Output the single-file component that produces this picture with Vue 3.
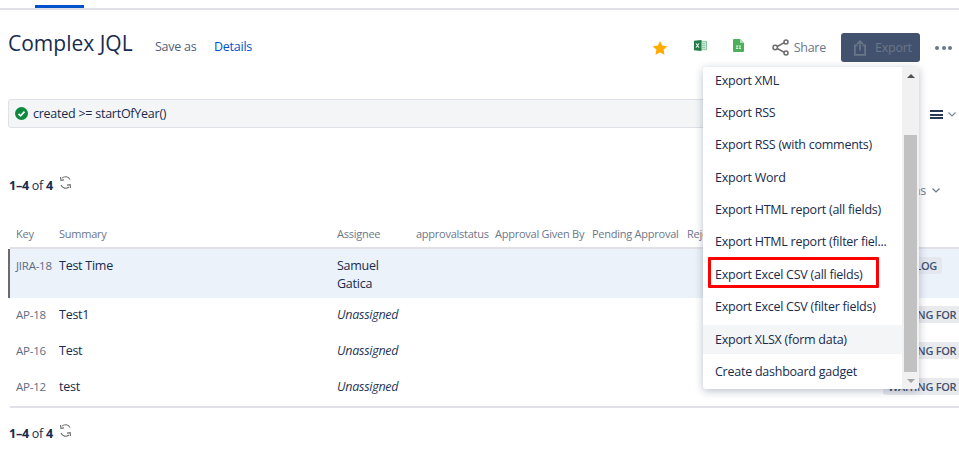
<script setup>
const menuItems = [
  'Export XML',
  'Export RSS',
  'Export RSS (with comments)',
  'Export Word',
  'Export HTML report (all fields)',
  'Export HTML report (filter fiel...',
  'Export Excel CSV (all fields)',
  'Export Excel CSV (filter fields)',
  'Export XLSX (form data)',
  'Create dashboard gadget'
]

const headers = ['Key', 'Summary', 'Assignee', 'approvalstatus', 'Approval Given By', 'Pending Approval', 'Rejected By', 'Status']

const issues = [
  { key: 'JIRA-18', summary: 'Test Time', assignee: 'Samuel Gatica', status: 'Backlog', selected: true },
  { key: 'AP-18', summary: 'Test1', assignee: null, status: 'Waiting for approval' },
  { key: 'AP-16', summary: 'Test', assignee: null, status: 'Waiting for approval' },
  { key: 'AP-12', summary: 'test', assignee: null, status: 'Waiting for approval' }
]
</script>

<template>
  <div class="page">
    <div class="topnav"><span class="tab"></span></div>

    <header class="head">
      <h1>Complex JQL</h1>
      <a class="save">Save as</a>
      <a class="details">Details</a>
      <div class="tools">
        <svg class="star" width="16" height="16" viewBox="0 0 16 16"><path d="M8 1l2.200 4.600 5 .7-3.600 3.500.9 5L8 12.400l-4.500 2.400.9-5L.8 6.300l5-.7z" fill="#ffab00"/></svg>
        <svg class="excel" width="13" height="11" viewBox="0 0 13 13" preserveAspectRatio="none">
          <rect x="5" y="1.500" width="7.500" height="10" fill="#cfe8d8" stroke="#8cc4a2"/>
          <path d="M8 4h3M8 6.500h3M8 9h3" stroke="#8cc4a2"/>
          <path d="M0 1L7.500 0v13L0 12z" fill="#1f7f45"/>
          <path d="M2 4l3 5M5 4L2 9" stroke="#fff" stroke-width="1.100"/>
        </svg>
        <svg class="sheet" width="11" height="13" viewBox="0 0 11 13">
          <path d="M0 1a1 1 0 011-1h6l4 4v8a1 1 0 01-1 1H1a1 1 0 01-1-1z" fill="#4caf5c"/>
          <path d="M7 0l4 4H7z" fill="#a9dcb8"/>
          <path d="M3 6.500h5v3.500H3z" fill="#d7eedc"/>
          <path d="M5.500 6.500V10M3 8.200h5" stroke="#4caf5c" stroke-width=".8"/>
        </svg>
        <a class="share">
          <svg width="17" height="17" viewBox="0 0 17 17" fill="#fff" stroke="#6b6b6b" stroke-width="1.500">
            <path d="M3.500 8.500L14 2.700M3.500 8.500L14 14.300"/>
            <circle cx="3.200" cy="8.500" r="2.200"/><circle cx="14" cy="2.900" r="2"/><circle cx="14" cy="14.100" r="2"/>
          </svg>
          Share
        </a>
        <button class="export">
          <svg width="12" height="16" viewBox="0 0 14 18" fill="none" stroke="#6b7688" stroke-width="2">
            <path d="M4 6H1v11h12V6h-3"/><path d="M7 12V2"/><path d="M3.500 4.500L7 1l3.500 3.500" />
          </svg>
          Export
        </button>
        <span class="dots"><i></i><i></i><i></i></span>
      </div>
    </header>

    <div class="jql">
      <svg width="13" height="13" viewBox="0 0 13 13"><circle cx="6.500" cy="6.500" r="6.500" fill="#0b8a3e"/><path d="M3.500 6.800l2.100 2 3.900-4.200" fill="none" stroke="#fff" stroke-width="1.700"/></svg>
      <span>created &gt;= startOfYear()</span>
    </div>
    <div class="view-toggle">
      <span class="burger"><i></i><i></i><i></i></span>
      <svg width="8" height="5" viewBox="0 0 8 5" fill="none" stroke="#7a869a" stroke-width="1.200"><path d="M.5.5L4 4 7.500.5"/></svg>
    </div>

    <div class="count top-count">
      <span><b>1–4</b> of <b>4</b></span>
      <svg class="refresh" width="13" height="13" viewBox="0 0 13 13" fill="none" stroke="#6f6f6f" stroke-width="1.100"><path d="M11 3.500A5 5 0 003 2.200"/><path d="M1.500 1l.4 3.400 3.200-.5"/><path d="M2 9a5 5 0 008 2"/><path d="M11.500 12l-.3-3.400-3.200.5"/></svg>
      <span class="columns">Columns
        <svg width="8" height="5" viewBox="0 0 8 5" fill="none" stroke="#6b778c" stroke-width="1.200"><path d="M.5.5L4 4 7.500.5"/></svg>
      </span>
    </div>

    <div class="table">
      <div class="row header">
        <span v-for="h in headers" :key="h">{{ h }}</span>
      </div>
      <div v-for="issue in issues" :key="issue.key" class="row" :class="{ selected: issue.selected }">
        <span class="key">{{ issue.key }}</span>
        <span>{{ issue.summary }}</span>
        <span v-if="issue.assignee">{{ issue.assignee }}</span>
        <em v-else>Unassigned</em>
        <span></span><span></span><span></span><span></span>
        <span><b class="badge">{{ issue.status }}</b></span>
      </div>
    </div>

    <div class="count">
      <span><b>1–4</b> of <b>4</b></span>
      <svg class="refresh" width="13" height="13" viewBox="0 0 13 13" fill="none" stroke="#6f6f6f" stroke-width="1.100"><path d="M11 3.500A5 5 0 003 2.200"/><path d="M1.500 1l.4 3.400 3.200-.5"/><path d="M2 9a5 5 0 008 2"/><path d="M11.500 12l-.3-3.400-3.200.5"/></svg>
    </div>

    <div class="menu">
      <ul>
        <li v-for="item in menuItems" :key="item" :class="{ hover: item.startsWith('Export XLSX') }">{{ item }}</li>
      </ul>
      <div class="scrollbar">
        <i class="up"></i>
        <span class="thumb"></span>
        <i class="down"></i>
      </div>
    </div>
    <div class="redbox"></div>
  </div>
</template>

<style>
html, body { margin: 0; background: #fff; overflow: hidden; }
</style>

<style scoped>
.page {
  position: relative;
  width: 959px;
  height: 468px;
  overflow: hidden;
  font-family: "Open Sans", "Noto Sans", sans-serif;
  font-size: 12.500px;
  letter-spacing: -.25px;
  color: #172b4d;
}
.topnav {
  height: 3px;
  padding-top: 5px;
  box-sizing: content-box;
  border-bottom: 2px solid #dfe1e6;
}
.tab {
  display: block;
  width: 49px;
  height: 3px;
  margin-left: 35px;
  background: #0052cc;
}
.head {
  display: flex;
  align-items: center;
  height: 29px;
  margin-top: 23px;
  padding-left: 8px;
}
h1 {
  margin: 0 0 9px;
  font-size: 21px;
  font-weight: 500;
  letter-spacing: 0;
  width: 147px;
  white-space: nowrap;
}
.save { color: #505f79; width: 59px; margin-bottom: 2px; }
.details { color: #0052cc; margin-bottom: 2px; }
.tools {
  margin-left: auto;
  display: flex;
  align-items: center;
  padding-right: 7px;
}
.star { margin-right: 25px; transform: translateX(-1px); }
.excel { margin: 0 26px 5px 0; }
.sheet { margin: 0 28px 5px 0; }
.share {
  display: flex;
  align-items: center;
  gap: 5px;
  color: #6b778c;
  margin-right: 15px;
}
.export {
  display: flex;
  align-items: center;
  gap: 9px;
  width: 79px;
  height: 29px;
  padding: 0 0 0 13px;
  border: 0;
  border-radius: 3px;
  background: #42526e;
  color: #6b7688;
  font: inherit;
  letter-spacing: inherit;
}
.dots {
  display: flex;
  gap: 2.500px;
  margin-left: 15px;
}
.dots i {
  width: 4px;
  height: 4px;
  border-radius: 50%;
  background: #6b778c;
}
.jql {
  display: flex;
  align-items: center;
  gap: 5px;
  height: 27px;
  width: 900px;
  margin: 37px 0 0 8px;
  padding-left: 6px;
  box-sizing: content-box;
  background: #f4f5f7;
  border: 1px solid #dfe1e6;
  border-radius: 3px;
}
.view-toggle {
  position: absolute;
  left: 930px;
  top: 110px;
  display: flex;
  align-items: center;
  gap: 5px;
}
.burger {
  display: flex;
  flex-direction: column;
  gap: 1.500px;
  width: 13px;
}
.burger i {
  height: 2px;
  background: #253858;
}
.count {
  display: flex;
  align-items: center;
  gap: 5px;
  height: 20px;
  padding-left: 9px;
}
.count b { font-weight: 700; }
.top-count { margin-top: 47px; padding-right: 19px; }
.refresh { margin-top: -6px; margin-left: 1px; }
.columns {
  margin-left: auto;
  margin-top: 11px;
  color: #6b778c;
}
.columns svg { margin: 0 0 2px 3px; }
.table {
  margin: 30px 0 0 10px;
  border-bottom: 2px solid #dfe1e6;
}
.row {
  display: grid;
  grid-template-columns: 43px 278px 79px 79px 97px 95px 196px 1fr;
  padding-left: 6px;
  height: 36px;
  align-items: start;
  padding-top: 8px;
  box-sizing: border-box;
  white-space: nowrap;
}
.row > * { line-height: 18px; }
.row.header {
  height: 24px;
  padding-top: 0;
  font-size: 11px;
  color: #6b778c;
  border-bottom: 2px solid #dfe1e6;
}
.row.selected {
  height: 49px;
  background: #ebf2fa;
  box-shadow: -2px 0 0 #6b6b6b;
}
.row.selected > span:nth-child(3) {
  white-space: normal;
}
.key { font-size: 11.500px; color: #5e6c84; }
em { font-style: italic; color: #253858; }
.badge {
  display: inline-block;
  height: 17px;
  line-height: 17px;
  margin-top: 0;
  padding: 0 5px;
  border-radius: 3px;
  background: #e9eaee;
  color: #42526e;
  font-size: 11px;
  font-weight: 600;
  text-transform: uppercase;
  letter-spacing: -.3px;
}
.selected .badge { background: #e4e8ee; }
.table + .count { margin-top: 15px; }

.menu {
  position: absolute;
  left: 703px;
  top: 67px;
  width: 216px;
  height: 322px;
  display: flex;
  background: #fff;
  border-radius: 3px;
  overflow: hidden;
  box-shadow: 0 2px 8px rgba(9, 30, 66, .28);
}
ul {
  flex: 1;
  margin: -1.500px 0 0;
  padding: 0;
  list-style: none;
  display: flex;
  flex-direction: column;
  gap: 3.400px;
}
li {
  height: 29px;
  line-height: 29px;
  padding-left: 12px;
  white-space: nowrap;
  color: #172b4d;
}
li.hover { background: #f4f5f7; }
.scrollbar {
  position: relative;
  width: 17px;
  background: #f1f1f1;
  display: flex;
  flex-direction: column;
  align-items: center;
}
.thumb {
  position: absolute;
  left: 2px;
  top: 68px;
  width: 13px;
  height: 237px;
  background: #c1c1c1;
}
.up, .down {
  position: absolute;
  left: 5px;
  width: 0;
  height: 0;
  border-left: 4px solid transparent;
  border-right: 4px solid transparent;
}
.up { top: 7px; border-bottom: 4px solid #505050; }
.down { bottom: 6px; border-top: 4px solid #a3a3a3; }
.redbox {
  position: absolute;
  left: 708px;
  top: 257px;
  width: 171px;
  height: 31px;
  box-sizing: border-box;
  border: 3px solid #f00;
  border-radius: 1px;
}
</style>
